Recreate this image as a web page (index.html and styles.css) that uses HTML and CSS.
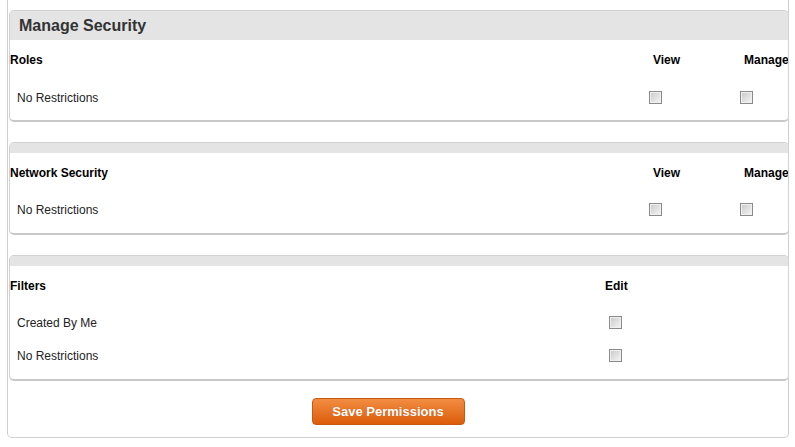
FILE: index.html
```html
<!DOCTYPE html>
<html lang="en">
<head>
    <meta charset="UTF-8">
    <title>Manage Security</title>
    <link rel="stylesheet" href="styles.css">
</head>
<body>
    <div class="wrap">
        <div class="panel">
            <div class="panel-head">Manage Security</div>
            <div class="row head-row">
                <div class="c-name">Roles</div>
                <div class="c-view">View</div>
                <div class="c-manage">Manage</div>
            </div>
            <div class="row first">
                <div class="c-name item">No Restrictions</div>
                <div class="c-view"><input type="checkbox"></div>
                <div class="c-manage"><input type="checkbox"></div>
            </div>
        </div>

        <div class="panel">
            <div class="panel-strip"></div>
            <div class="row head-row">
                <div class="c-name">Network Security</div>
                <div class="c-view">View</div>
                <div class="c-manage">Manage</div>
            </div>
            <div class="row">
                <div class="c-name item">No Restrictions</div>
                <div class="c-view"><input type="checkbox"></div>
                <div class="c-manage"><input type="checkbox"></div>
            </div>
        </div>

        <div class="panel last">
            <div class="panel-strip"></div>
            <div class="row head-row">
                <div class="c-filter">Filters</div>
                <div class="c-edit">Edit</div>
            </div>
            <div class="row">
                <div class="c-filter item">Created By Me</div>
                <div class="c-edit"><input type="checkbox"></div>
            </div>
            <div class="row">
                <div class="c-filter item">No Restrictions</div>
                <div class="c-edit"><input type="checkbox"></div>
            </div>
        </div>

        <div class="actions">
            <button class="btn-save">Save Permissions</button>
        </div>
    </div>
</body>
</html>
```

FILE: styles.css
```css
*{
    margin: 0;
    padding: 0;
    box-sizing: border-box;
}
body{
    background: #fff;
    font-family: "Liberation Sans", Arial, sans-serif;
    font-size: 12px;
    color: #222;
}
.wrap{
    margin: 0 6px 0 7px;
    padding-top: 10px;
    border: 1px solid #cfcfcf;
    border-top: none;
    border-radius: 0 0 5px 5px;
    height: 438px;
}
.panel{
    margin: 0 -1px 20px 1px;
    border: 1px solid #d2d2d2;
    border-bottom: 2px solid #c8c8c8;
    border-radius: 5px;
    overflow: hidden;
    padding-bottom: 7px;
}
.panel.last{
    margin-bottom: 0;
}
.panel-head{
    height: 29px;
    line-height: 29px;
    padding-left: 9px;
    background: #e4e4e4;
    font-size: 16px;
    font-weight: bold;
    color: #333;
}
.panel-strip{
    height: 10px;
    background: #e4e4e4;
}
.row{
    display: flex;
    align-items: center;
    height: 33px;
    white-space: nowrap;
}
.row.first{
    padding-top: 2px;
}
.head-row{
    height: 40px;
    font-weight: bold;
    color: #000;
}
.c-name{
    width: 635px;
    flex: none;
}
.c-view{
    width: 91px;
    flex: none;
}
.c-manage{
    width: 92px;
    flex: none;
}
.head-row .c-view{
    padding-left: 8px;
}
.head-row .c-manage{
    padding-left: 8px;
}
.c-filter{
    width: 595px;
    flex: none;
}
.c-edit{
    width: 80px;
    flex: none;
}
.item{
    padding-left: 7px;
}
.row input{
    -webkit-appearance: none;
    appearance: none;
    display: block;
    width: 13px;
    height: 13px;
    margin-left: 4px;
    border: 1px solid #8a8a8a;
    background: linear-gradient(135deg, #c8c8c8, #f6f6f6);
    box-shadow: inset 0 0 0 1px #f0f0f0;
}
.actions{
    padding: 17px 20px 0 0;
    text-align: center;
}
.btn-save{
    height: 27px;
    width: 153px;
    border: 1px solid #c9590f;
    border-radius: 4px;
    background: linear-gradient(#f28d42, #dc5c0a);
    color: #fff;
    font-family: "Liberation Sans", Arial, sans-serif;
    font-size: 13px;
    font-weight: bold;
    text-shadow: 0 0 1px rgba(120, 40, 0, .4);
}
```
